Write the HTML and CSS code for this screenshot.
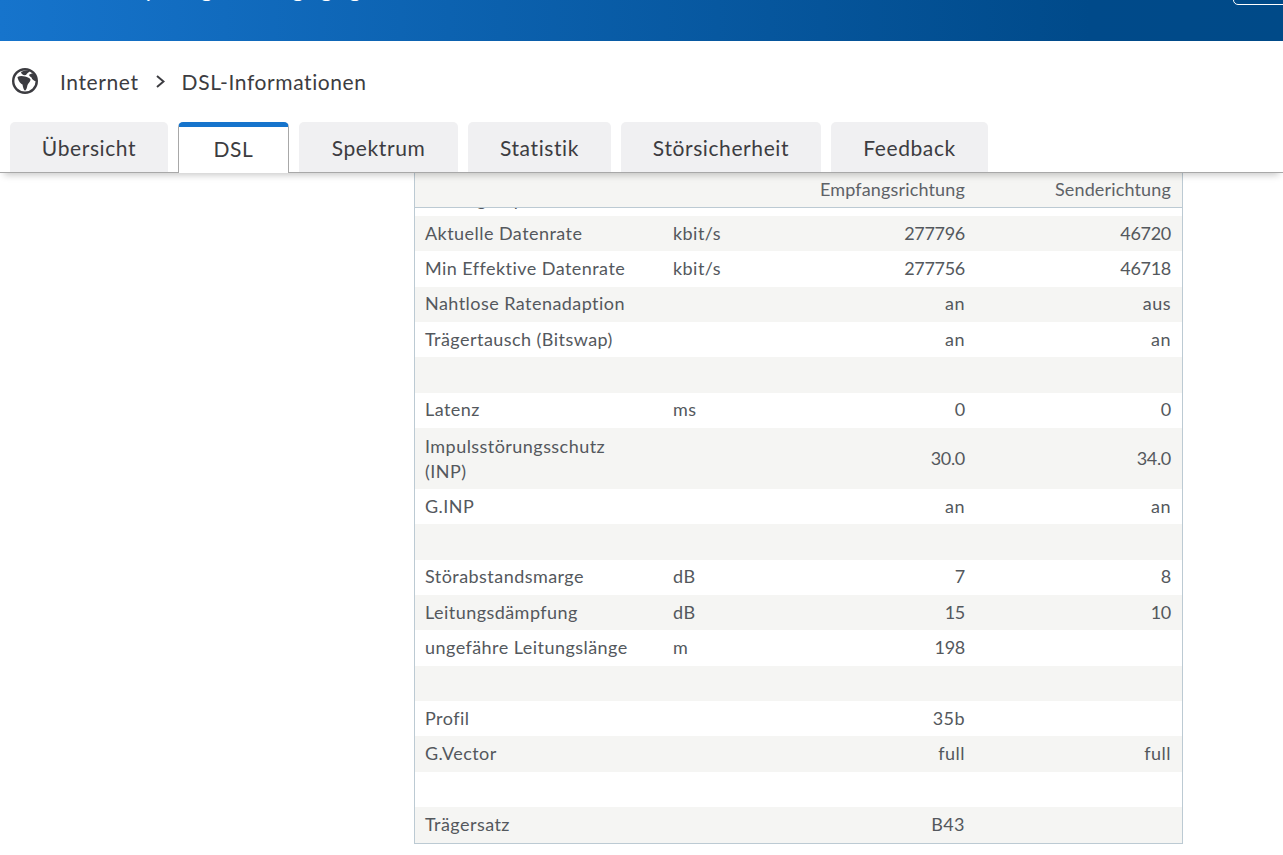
FILE: index.html
```html
<!DOCTYPE html>
<html lang="de">
<head>
<meta charset="utf-8">
<title>DSL-Informationen</title>
<link rel="stylesheet" href="styles.css">
</head>
<body>
<header class="topbar">
  <div class="topbar-title"><span class="frag-a">y</span><span class="frag-b">g</span><span class="frag-c">g</span><span class="frag-d">g</span><span class="frag-d">g</span></div>
  <div class="topbar-btn"></div>
</header>
<nav class="crumbs">
  <svg class="globe" viewBox="0 0 28 28" width="28" height="28" aria-hidden="true">
    <circle cx="14" cy="14" r="11.800" fill="none" stroke="#3c3c41" stroke-width="2.400"/>
    <path fill="#3c3c41" d="M6.500 10C9 8.500 12 9 14 9.500c2.500.5 5 1.500 5.500 3 0 2-2 3.500-3 5.500-.5 2.500-1 5-2.500 5.700-1.500-.7-2-3.700-2.500-6.200C9 16.500 7 13 6.500 10zM10 5c2-1.500 6-2 9-1-1 1.500-3 2-4 4-2 .5-5-.5-5-3zM18 8c2-1.500 4-2 5-.5 2 2.500 2.500 4.500 2.500 7-2.500-.5-4.500-2-5-4-1-.5-2-1.500-2.500-2.500z"/>
  </svg>
  <span class="crumb">Internet</span>
  <svg class="chev" viewBox="0 0 9 13" width="9" height="13" aria-hidden="true"><path d="M1 1l6.500 5.500L1 12" fill="none" stroke="#3c3c41" stroke-width="2"/></svg>
  <span class="crumb">DSL-Informationen</span>
</nav>
<div class="tabs">
  <div class="tab t1">Übersicht</div>
  <div class="tab t2 active">DSL</div>
  <div class="tab t3">Spektrum</div>
  <div class="tab t4">Statistik</div>
  <div class="tab t5">Störsicherheit</div>
  <div class="tab t6">Feedback</div>
</div>
<main class="content">
  <section class="panel">
    <div class="head row-grid"><span></span><span></span><span class="num">Empfangsrichtung</span><span class="num">Senderichtung</span></div>
    <div class="gap"><div class="gap-text">Leitungskapazität</div></div>
    <div class="row row-grid"><span>Aktuelle Datenrate</span><span>kbit/s</span><span class="num dig">277796</span><span class="num dig">46720</span></div>
    <div class="row row-grid"><span>Min Effektive Datenrate</span><span>kbit/s</span><span class="num dig">277756</span><span class="num dig">46718</span></div>
    <div class="row row-grid"><span>Nahtlose Ratenadaption</span><span></span><span class="num">an</span><span class="num">aus</span></div>
    <div class="row row-grid"><span>Trägertausch (Bitswap)</span><span></span><span class="num">an</span><span class="num">an</span></div>
    <div class="row row-grid"><span></span></div>
    <div class="row row-grid"><span>Latenz</span><span>ms</span><span class="num dig">0</span><span class="num dig">0</span></div>
    <div class="row row-grid tall"><span class="wrap">Impulsstörungsschutz (INP)</span><span></span><span class="num dig">30.0</span><span class="num dig">34.0</span></div>
    <div class="row row-grid"><span>G.INP</span><span></span><span class="num">an</span><span class="num">an</span></div>
    <div class="row row-grid"><span></span></div>
    <div class="row row-grid"><span>Störabstandsmarge</span><span>dB</span><span class="num dig">7</span><span class="num dig">8</span></div>
    <div class="row row-grid"><span>Leitungsdämpfung</span><span>dB</span><span class="num dig">15</span><span class="num dig">10</span></div>
    <div class="row row-grid"><span>ungefähre Leitungslänge</span><span>m</span><span class="num dig">198</span><span class="num"></span></div>
    <div class="row row-grid"><span></span></div>
    <div class="row row-grid"><span>Profil</span><span></span><span class="num">35b</span><span class="num"></span></div>
    <div class="row row-grid"><span>G.Vector</span><span></span><span class="num">full</span><span class="num">full</span></div>
    <div class="row row-grid"><span></span></div>
    <div class="row row-grid"><span>Trägersatz</span><span></span><span class="num">B43</span><span class="num"></span></div>
  </section>
</main>
</body>
</html>
```
FILE: styles.css
```css
* { box-sizing: border-box; }
html, body { margin: 0; height: 100%; overflow: hidden; background: #fff; }
body { font-family: "Lato", "Noto Sans", sans-serif; font-variant-ligatures: none; color: #54585d; font-size: 18px; letter-spacing: .45px; }

.topbar { height: 41px; position: relative; overflow: hidden; background: linear-gradient(90deg, #1674cc 0%, #0c62b0 35%, #004a8a 85%, #004a88 100%); }
.topbar-title { position: absolute; left: 144px; top: -24px; display: flex; color: #fff; font-size: 24px; line-height: 24px; letter-spacing: 0; white-space: nowrap; }
.frag-b { margin-left: 44px; }
.frag-c { margin-left: 79px; }
.frag-d { margin-left: 16px; }
.topbar-btn { position: absolute; left: 1233px; top: -20px; width: 80px; height: 25px; border: 1px solid #fff; border-radius: 5px; }

.crumbs { height: 81px; padding: 0 0 1px 11px; display: flex; align-items: center; color: #3c3c41; font-size: 21px; letter-spacing: .6px; }
.globe { margin-right: 21px; }
.crumb { white-space: nowrap; }
.chev { margin: 0 17px; }

.tabs { height: 51px; display: flex; padding-left: 10px; gap: 10px; border-bottom: 1px solid #a8a8a8; box-shadow: 0 6px 7px -4px rgba(0,0,0,.22); position: relative; z-index: 2; background: #fff; }
.tab { height: 50px; background: #f0f0f2; border-radius: 5px 5px 0 0; display: flex; align-items: center; justify-content: center; font-size: 21px; letter-spacing: .6px; color: #3c3c41; }
.t1 { width: 158px; }
.t2 { width: 111px; }
.t3 { width: 159px; }
.t4 { width: 143px; }
.t5 { width: 200px; }
.t6 { width: 157px; }
.tab.active { background: #fff; border: 1px solid #a8a8a8; border-top: 5px solid #1674cc; border-bottom: 0; height: 51px; padding-bottom: 4px; }

.content { padding-left: 414px; }
.panel { width: 769px; border: 1px solid #bccad3; border-top: 0; }
.row-grid { display: grid; grid-template-columns: 248px 100px 192px 206px; padding: 0 10px; align-items: center; }
.head { height: 35px; padding-bottom: 2px; background: #f5f5f3; border-bottom: 1px solid #bccad3; letter-spacing: .15px; color: #5e6267; }
.gap { height: 8px; overflow: hidden; padding-left: 10px; }
.gap-text { margin-top: -20px; line-height: 22px; }
.row { min-height: 35.350px; padding-bottom: 2px; }
.row:nth-child(odd) { background: #f5f5f3; }
.row.tall { min-height: 61px; line-height: 25px; padding-bottom: 0; }
.wrap { max-width: 200px; }
.num { text-align: right; }
.dig { letter-spacing: -.3px; }
```
